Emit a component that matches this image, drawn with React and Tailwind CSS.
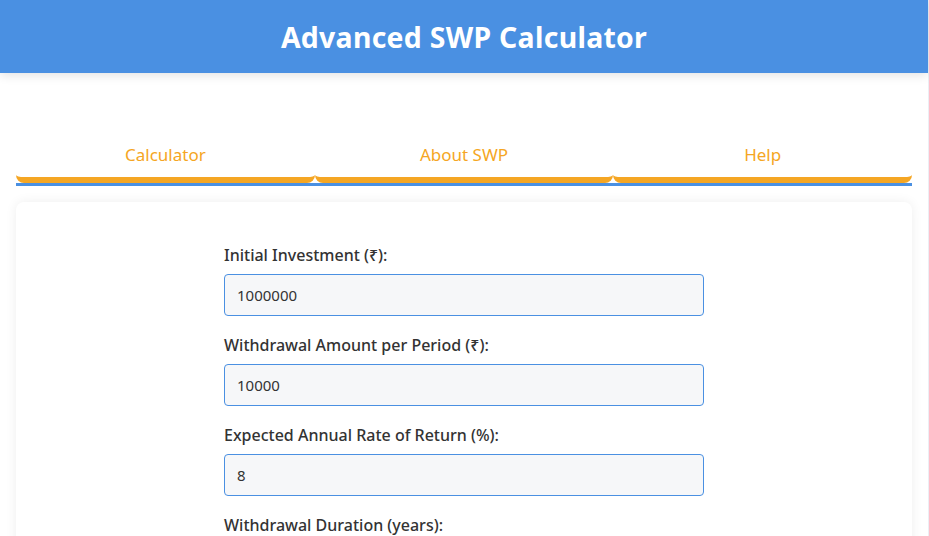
import { useState } from "react";

const fields = [
  { label: "Initial Investment (₹):", value: "1000000" },
  { label: "Withdrawal Amount per Period (₹):", value: "10000" },
  { label: "Expected Annual Rate of Return (%):", value: "8" },
  { label: "Withdrawal Duration (years):", value: "10" },
];

const tabs = ["Calculator", "About SWP", "Help"];

export default function App() {
  const [values, setValues] = useState(fields.map((f) => f.value));

  return (
    <div className="min-h-screen bg-white text-[#333] font-['Noto_Sans',sans-serif] border-r border-[#eceef4]">
      <header className="h-[73px] bg-[#4a90e2] shadow-[0_2px_10px_rgba(0,0,0,0.12)] flex items-center justify-center pt-[2px]">
        <h1 className="text-white text-[28.4px] font-bold tracking-[0.3px]">Advanced SWP Calculator</h1>
      </header>

      <div className="px-4">
        <nav className="mt-[61px] flex border-b-[3px] border-[#4a90e2]">
          {tabs.map((t) => (
            <button
              key={t}
              className="flex-1 pt-[7px] pb-[9px] text-[17px] text-[#f5a623] border-b-[6px] border-[#f5a623] rounded-lg leading-[27px]"
            >
              {t}
            </button>
          ))}
        </nav>

        <div className="mt-[16px] bg-white rounded-lg shadow-[0_0_12px_rgba(0,0,0,0.07)] pt-[41px] pb-8">
          <form className="max-w-[480px] mx-auto">
            {fields.map((f, i) => (
              <div key={f.label} className="mb-[17px]">
                <label className="block text-[16px] font-medium leading-[24px] mb-[7px]">{f.label}</label>
                <input
                  className="w-full h-[42px] rounded border border-[#4a90e2] bg-[#f6f7f9] px-3 text-[15px] outline-none"
                  value={values[i]}
                  onChange={(e) => {
                    const next = [...values];
                    next[i] = e.target.value;
                    setValues(next);
                  }}
                />
              </div>
            ))}
          </form>
        </div>
      </div>
    </div>
  );
}
